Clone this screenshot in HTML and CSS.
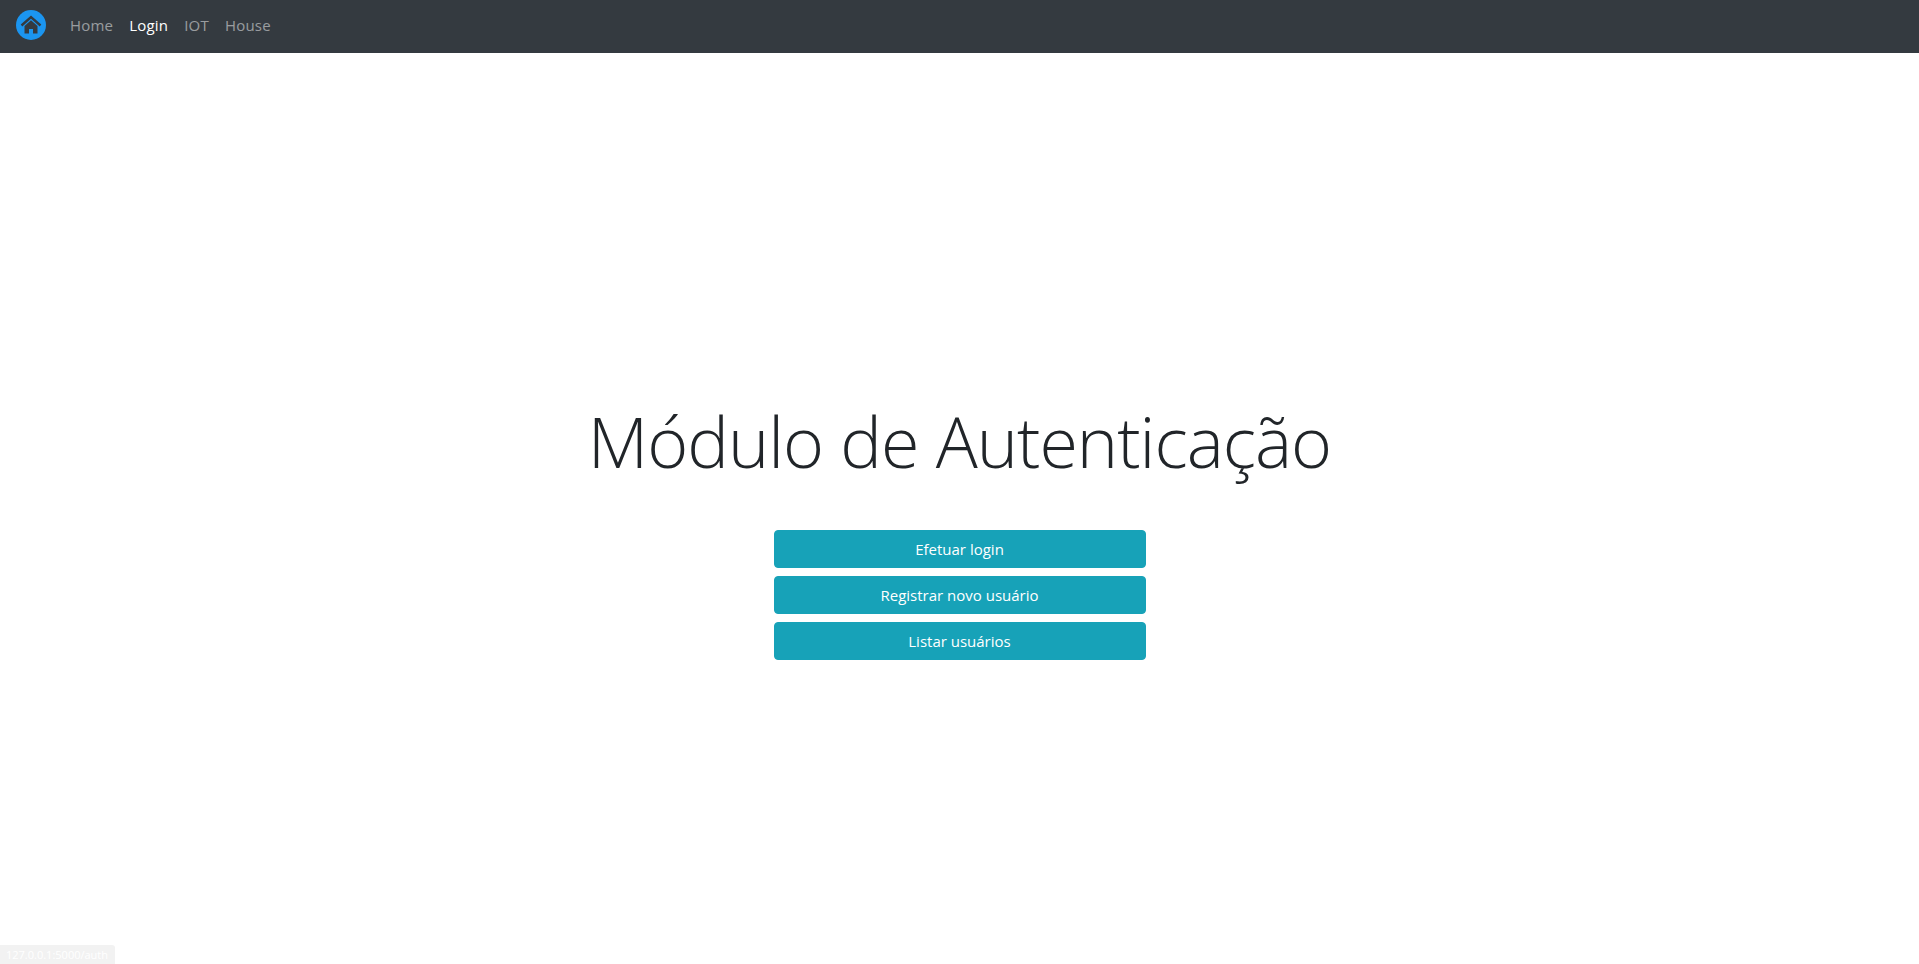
FILE: index.html
```html
<!DOCTYPE html>
<html lang="pt-BR">
<head>
    <meta charset="UTF-8">
    <title>Módulo de Autenticação</title>
    <link rel="stylesheet" href="styles.css">
</head>
<body>
<nav class="navbar">
    <a class="brand" href="#">
        <svg class="brand-icon" width="32" height="32" viewBox="0 0 32 32">
            <circle cx="16" cy="16" r="15" fill="#1b95f0"/>
            <path d="M6.5 16.5 L16 8 L25.5 16.5" fill="none" stroke="#343a40" stroke-width="2.4"/>
            <path d="M9.5 17 L16 11.2 L22.5 17 V24.5 H18 V20 H14 V24.5 H9.5 Z" fill="#343a40"/>
        </svg>
    </a>
    <ul class="nav">
        <li><a href="#">Home</a></li>
        <li class="current"><a href="#">Login</a></li>
        <li><a href="#">IOT</a></li>
        <li><a href="#">House</a></li>
    </ul>
</nav>
<main class="content">
    <h1 class="title">Módulo de Autenticação</h1>
    <div class="actions">
        <a class="btn" href="#">Efetuar login</a>
        <a class="btn" href="#">Registrar novo usuário</a>
        <a class="btn" href="#">Listar usuários</a>
    </div>
</main>
<div class="status">127.0.0.1:5000/auth</div>
</body>
</html>
```
FILE: styles.css
```css
* {
    padding: 0;
    margin: 0;
    box-sizing: border-box;
}
ul {
    list-style: none;
}
a {
    text-decoration: none;
}
body,html {
    width: 100%;
    height: 100%;
}
body {
    font-family: "Open Sans", "Noto Sans", sans-serif;
    font-size: 15px;
    color: #212529;
    background-color: #ffffff;
    display: flex;
    flex-direction: column;
    overflow: hidden;
}
.navbar {
    height: 53px;
    background-color: #343a40;
    display: flex;
    align-items: center;
    padding: 0 15px 3px;
}
.brand {
    display: flex;
    margin-right: 15px;
}
.nav {
    display: flex;
    letter-spacing: .2px;
}
.nav li a {
    display: block;
    padding: 8px;
    color: rgba(255,255,255,.5);
}
.nav li.current a {
    color: #ffffff;
}
.content {
    flex: 1;
    display: flex;
    flex-direction: column;
    align-items: center;
    padding-top: 345px;
}
.title {
    font-size: 70px;
    font-weight: 300;
    line-height: 86px;
    letter-spacing: -1px;
    margin-bottom: 46px;
}
.actions {
    width: 372px;
    display: flex;
    flex-direction: column;
    gap: 8px;
}
.btn {
    height: 38px;
    line-height: 36px;
    text-align: center;
    color: #ffffff;
    background-color: #17a2b8;
    border: 1px solid #17a2b8;
    border-radius: 4px;
}
.status {
    position: fixed;
    left: 0;
    bottom: 0;
    width: 115px;
    height: 19px;
    line-height: 19px;
    padding-left: 6px;
    font-size: 11px;
    color: #ffffff;
    background-color: #f2f2f2;
    border-top-right-radius: 3px;
}
```
